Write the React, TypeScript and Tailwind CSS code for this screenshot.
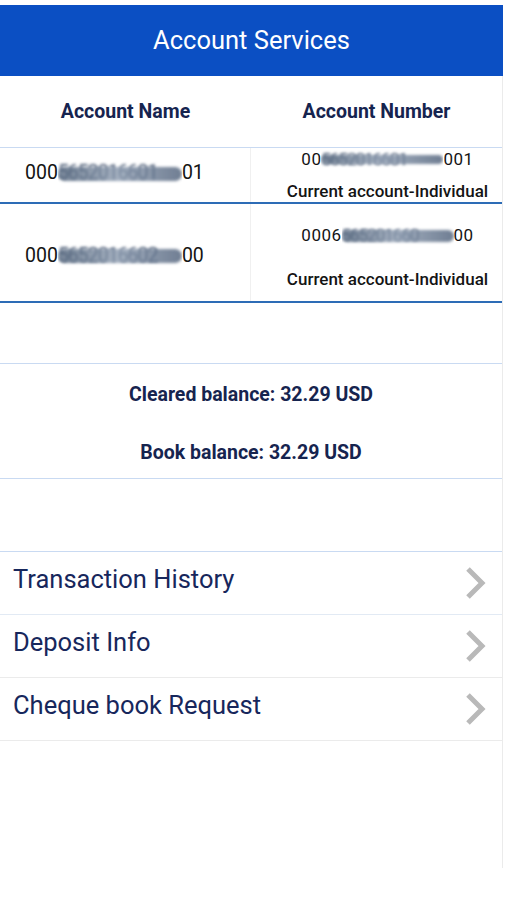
import { FC } from "react";

const navy = "text-[#17275c]";

const Blur: FC<{ w: string; digits: string }> = ({ w, digits }) => (
  <span className={`relative inline-block ${w} overflow-hidden align-middle`}>
    <span className="block blur-[1.4px] text-[#3f506b] whitespace-nowrap tracking-[-1px]">
      {digits}
    </span>
    <span className="absolute inset-x-0 top-[28%] h-[48%] rounded-full bg-linear-to-r from-[#56687f] via-[#8d9cb0] to-[#4c5e78] opacity-80 blur-[1.5px]" />
  </span>
);

const Chevron: FC = () => (
  <svg width="22" height="34" viewBox="0 0 22 34" className="shrink-0">
    <polyline
      points="4,3 18,17 4,31"
      fill="none"
      stroke="#b9b9b9"
      strokeWidth="5"
      strokeLinejoin="miter"
    />
  </svg>
);

const menu = ["Transaction History", "Deposit Info", "Cheque book Request"];

const App: FC = () => {
  return (
    <div className="w-[506px] h-[900px] bg-white pt-[5px] font-['Roboto',sans-serif]">
      <div className="w-[503px]">
        <div className="h-[71px] bg-[#0b4fc3] flex items-center justify-center text-white text-[25.5px]">
          Account Services
        </div>
        <div className="h-[792px] border-r border-[#ebebeb]">
          {/* column headers */}
          <div className="h-[72px] flex items-center border-b border-[#c9daf2] font-bold text-[19.5px] text-[#16244f]">
            <div className="w-[251px] text-center">Account Name</div>
            <div className="flex-1 text-center">Account Number</div>
          </div>

          {/* accounts list, scrolled a little so the first row is partly hidden */}
          <div className="h-[56px] flex border-b-2 border-[#2d6cb6]">
            <div className="w-[251px] flex items-center pl-[25px] pb-[4px] text-[19.5px] text-[#141414] border-r border-[#f0f0f0]">
              <span>000</span>
              <Blur w="w-[124px]" digits="5652016601" />
              <span>01</span>
            </div>
            <div className="flex-1 flex flex-col items-center justify-end gap-[12px] pl-[22px] overflow-hidden text-[17px] text-[#141414]">
              <div className="flex items-center tracking-[0.5px] leading-[18px]">
                <span>00</span>
                <Blur w="w-[122px]" digits="5652016601" />
                <span>001</span>
              </div>
              <div className="font-medium leading-[22px]">Current account-Individual</div>
            </div>
          </div>
          <div className="h-[99px] flex border-b-2 border-[#2d6cb6]">
            <div className="w-[251px] flex items-center pl-[25px] pt-[6px] text-[19.5px] text-[#141414] border-r border-[#f0f0f0]">
              <span>000</span>
              <Blur w="w-[124px]" digits="5652016602" />
              <span>00</span>
            </div>
            <div className="flex-1 flex flex-col items-center justify-center gap-[18px] pl-[22px] pt-[10px] text-[17px] text-[#141414]">
              <div className="flex items-center tracking-[0.5px]">
                <span>0006</span>
                <Blur w="w-[112px]" digits="565201660" />
                <span>00</span>
              </div>
              <div className="font-medium">Current account-Individual</div>
            </div>
          </div>

          <div className="h-[60px]" />

          {/* balances */}
          <div className="h-[116px] border-y border-[#c9daf2] flex flex-col items-center justify-center gap-[29px] pt-[5px] font-bold text-[19.5px] text-[#16244f]">
            <div>Cleared balance: 32.29 USD</div>
            <div>Book balance: 32.29 USD</div>
          </div>

          <div className="h-[73px] border-b border-[#c9daf2]" />

          {/* menu */}
          {menu.map((m, i) => (
            <div
              key={m}
              className={`h-[63px] flex items-center justify-between pl-[13px] pr-[16px] border-b ${
                i === 0 ? "border-[#e2eaf4]" : "border-[#ebebeb]"
              }`}
            >
              <span className={`text-[25.5px] ${navy} pb-[8px]`}>{m}</span>
              <Chevron />
            </div>
          ))}
        </div>
      </div>
    </div>
  );
};

export default App;
